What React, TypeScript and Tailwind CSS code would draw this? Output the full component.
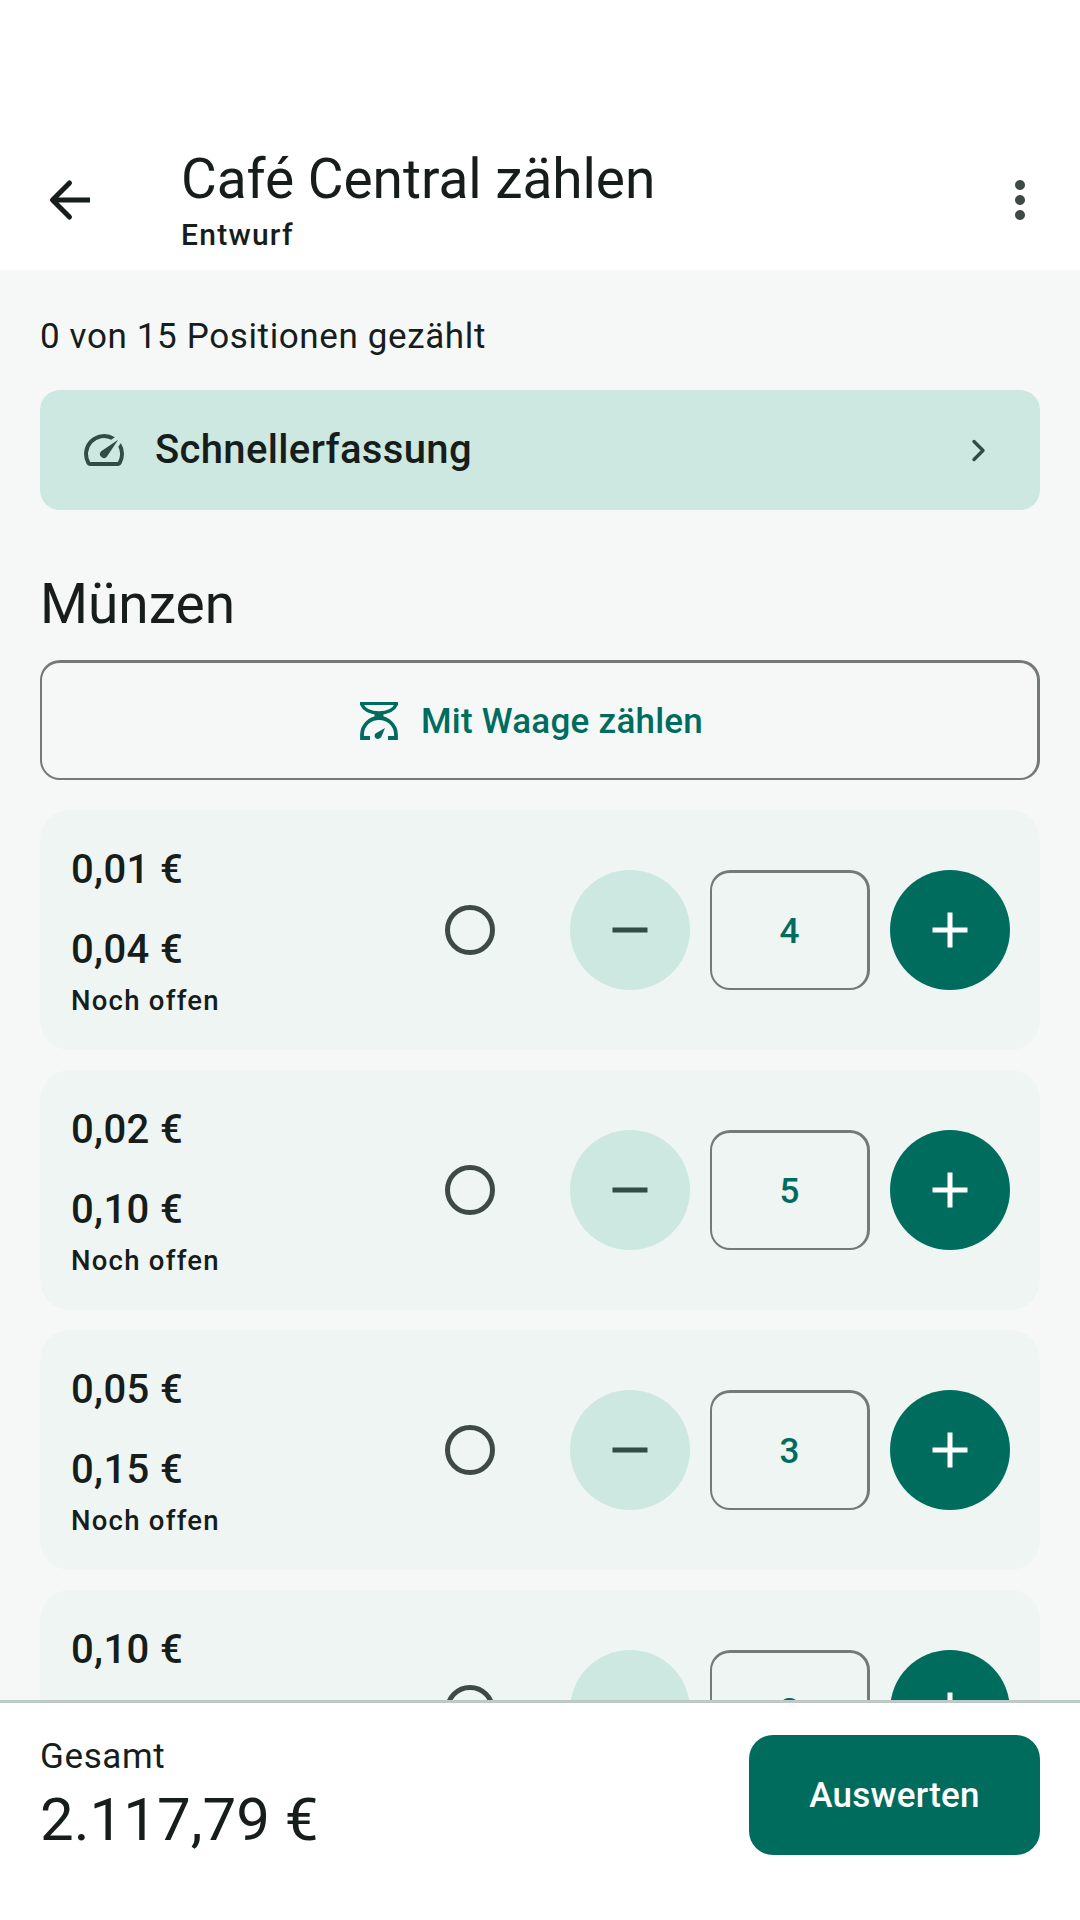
import React from 'react';

const PRIMARY = '#006c5e';

const coins = [
  { value: '0,01 €', sum: '0,04 €', count: 4 },
  { value: '0,02 €', sum: '0,10 €', count: 5 },
  { value: '0,05 €', sum: '0,15 €', count: 3 },
  { value: '0,10 €', sum: '0,20 €', count: 2 },
];

const Icon = ({ d, size, color }: { d: string; size: number; color: string }) => (
  <svg width={size} height={size} viewBox="0 0 24 24" fill={color}>
    <path d={d} />
  </svg>
);

const ScaleIcon = () => (
  <svg width="38" height="38" viewBox="0 0 38 38" fill="none">
    <path d="M0 1.5H38" stroke={PRIMARY} strokeWidth="3" />
    <path d="M1.5 2C4 8 11 11 19 11C27 11 34 8 36.5 2" stroke={PRIMARY} strokeWidth="3.4" />
    <rect x="14.5" y="11" width="9" height="6" fill={PRIMARY} />
    <path d="M10 36H2V33C2 23 10 16 19 16C28 16 36 23 36 33V36H28" stroke={PRIMARY} strokeWidth="3.8" />
    <path d="M25 26L15.5 31.5C14 33 14.5 35.5 16 36.5C18 37.5 20.5 36.5 21.5 34.5Z" fill={PRIMARY} />
  </svg>
);

const CoinRow = ({ value, sum, count }: { value: string; sum: string; count: number }) => (
  <div className="flex h-[240px] shrink-0 items-center rounded-[30px] bg-[#eff5f2] pr-[30px] pl-[31px]">
    <div className="flex-1 pt-[6px]">
      <div className="text-[40px] leading-[50px] font-medium tracking-[0.375px] text-[#161d1b]">{value}</div>
      <div className="mt-[30px] text-[40px] leading-[50px] font-medium tracking-[0.375px] text-[#161d1b]">{sum}</div>
      <div className="mt-[6px] text-[27.5px] leading-[40px] font-medium tracking-[1.25px] text-[#161d1b]">Noch offen</div>
    </div>
    <div className="mr-[40px] flex h-[120px] w-[120px] items-center justify-center">
      <div className="h-[50px] w-[50px] rounded-full border-[5px] border-[#3f4946]" />
    </div>
    <div className="flex items-center gap-[20px]">
      <div className="flex h-[120px] w-[120px] items-center justify-center rounded-full bg-[#cde8e0]">
        <Icon d="M19 13H5v-2h14v2z" size={60} color="#334b45" />
      </div>
      <div className="flex h-[120px] w-[160px] items-center justify-center rounded-[20px] border-t-[3px] border-r-[3px] border-b-2 border-l-2 border-[#737a77] pt-[3px] text-[35px] font-medium text-[#006c5e]">
        {count}
      </div>
      <div className="flex h-[120px] w-[120px] items-center justify-center rounded-full bg-[#006c5e]">
        <Icon d="M19 13h-6v6h-2v-6H5v-2h6V5h2v6h6v2z" size={60} color="#ffffff" />
      </div>
    </div>
  </div>
);

export default function App() {
  return (
    <div className="flex h-[1920px] w-[1080px] flex-col overflow-hidden bg-white font-['Roboto',sans-serif] text-[#161d1b]">
      <header className="flex h-[270px] shrink-0 bg-white pt-[140px]">
        <div className="flex h-[120px] w-[181px] shrink-0 items-center pl-[40px]">
          <svg width="60" height="60" viewBox="0 0 60 60" fill="none" stroke="#161d1b" strokeWidth="5">
            <path d="M29.5 13L12.5 30L29.5 47" strokeLinecap="round" strokeLinejoin="round" />
            <path d="M13 30H50" />
          </svg>
        </div>
        <div className="flex-1 pt-[9px]">
          <div className="text-[55px] leading-[60px] tracking-[-0.05px]">Café Central zählen</div>
          <div className="mt-[6px] text-[30px] leading-[40px] font-medium tracking-[1.25px]">Entwurf</div>
        </div>
        <div className="flex h-[120px] w-[120px] items-center justify-center">
          <Icon
            d="M12 8c1.1 0 2-.9 2-2s-.9-2-2-2-2 .9-2 2 .9 2 2 2zm0 2c-1.1 0-2 .9-2 2s.9 2 2 2 2-.9 2-2-.9-2-2-2zm0 6c-1.1 0-2 .9-2 2s.9 2 2 2 2-.9 2-2-.9-2-2-2z"
            size={60}
            color="#3f4946"
          />
        </div>
      </header>

      <main className="flex min-h-0 flex-1 flex-col overflow-hidden bg-[#f5f8f7] px-[40px] pt-[47px]">
        <div className="text-[35px] leading-[40px] tracking-[0.625px]">0 von 15 Positionen gezählt</div>

        <div className="mt-[33px] flex h-[120px] shrink-0 items-center rounded-[20px] bg-[#cde8e0] pr-[46px] pl-[40px]">
          <svg width="48" height="48" viewBox="0 0 24 24" fill="#334b45">
            <path d="M20.38 8.57l-1.23 1.85a8 8 0 0 1-.22 7.58H5.07A8 8 0 0 1 15.58 6.85l1.85-1.23A10 10 0 0 0 3.35 19a2 2 0 0 0 1.72 1h13.85a2 2 0 0 0 1.74-1 10 10 0 0 0-.27-10.44zm-9.79 6.84a2 2 0 0 0 2.83 0l5.66-8.49-8.49 5.66a2 2 0 0 0 0 2.83z" />
          </svg>
          <div className="ml-[27px] flex-1 text-[40px] font-medium tracking-[0.35px]">Schnellerfassung</div>
          <svg width="24" height="30" viewBox="0 0 24 30" fill="none">
            <path d="M4 6.5L13 15.5L4 24.5" stroke="#334b45" strokeWidth="3.4" strokeLinecap="round" strokeLinejoin="round" />
          </svg>
        </div>

        <div className="mt-[62px] text-[55px] leading-[64px]">Münzen</div>

        <div className="mt-[24px] flex h-[120px] shrink-0 items-center justify-center gap-[23px] rounded-[20px] border-t-[3px] border-r-[3px] border-b-2 border-l-2 border-[#737a77] pr-[16px]">
          <ScaleIcon />
          <span className="pt-[4px] text-[35px] font-medium tracking-[0.25px] text-[#006c5e]">Mit Waage zählen</span>
        </div>

        <div className="mt-[30px] flex flex-col gap-[20px]">
          {coins.map((coin) => (
            <CoinRow key={coin.value} {...coin} />
          ))}
        </div>
      </main>

      <footer className="flex h-[220px] shrink-0 items-start justify-between border-t-[3px] border-[#bec9c5] bg-white pt-[32px] pr-[40px] pl-[40px]">
        <div className="pt-[2px]">
          <div className="text-[35px] leading-[40px] tracking-[0.625px]">Gesamt</div>
          <div className="mt-[8px] text-[60px] leading-[70px]">2.117,79 €</div>
        </div>
        <div className="flex h-[120px] w-[291px] items-center justify-center rounded-[24px] bg-[#006c5e] pt-[3px] text-[35px] font-medium tracking-[0.25px] text-white">
          Auswerten
        </div>
      </footer>
    </div>
  );
}
